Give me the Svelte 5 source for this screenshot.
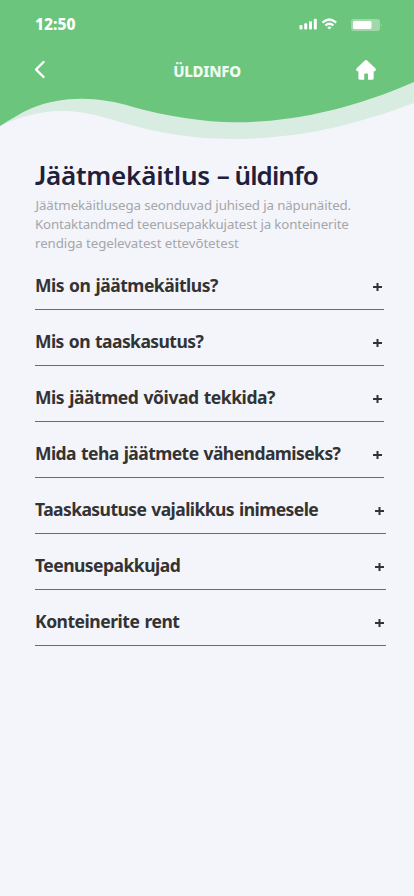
<script>
  const topics = [
    { title: 'Mis on jäätmekäitlus?', width: 348.5, spacing: -0.49 },
    { title: 'Mis on taaskasutus?', width: 348.5, spacing: -0.56 },
    { title: 'Mis jäätmed võivad tekkida?', width: 348.5, spacing: -0.45 },
    { title: 'Mida teha jäätmete vähendamiseks?', width: 348.5, spacing: -0.56 },
    { title: 'Taaskasutuse vajalikkus inimesele', width: 350.5, spacing: -0.57 },
    { title: 'Teenusepakkujad', width: 350.5, spacing: -0.53 },
    { title: 'Konteinerite rent', width: 350.5, spacing: -0.48 }
  ];
</script>

<div class="screen">
  <header>
    <svg class="wave" width="414" height="145" viewBox="0 0 414 145" aria-hidden="true">
      <path fill="#d9ece1" d="M0 0H414V103C350 127 295 139 232 139C185 139 145 130 110 119C67 106 37 109 0 126Z" />
      <path fill="#6cc57c" d="M0 0H414V82C350 110 290 122.3 235 122.3C205 122.3 165 116 133 107C100 97 65 95 32 108C20 113 10 120 0 126Z" />
    </svg>
    <div class="status">
      <span class="time">12:50</span>
      <svg width="84" height="16" viewBox="0 0 84 16" fill="#fff" aria-hidden="true">
        <rect x="0.5" y="9" width="3" height="4.4" rx="1" />
        <rect x="5.2" y="7.2" width="3" height="6.2" rx="1" />
        <rect x="10" y="5.2" width="3" height="8.2" rx="1" />
        <rect x="14.8" y="2.8" width="3" height="10.6" rx="1" />
        <path d="M22.6 5.8Q30.4-1.2 38 5.8L36.4 7.4Q30.4 2.2 24.3 7.4Z" />
        <path d="M25.6 8.7Q30.4 4.5 35.2 8.7L33.6 10.3Q30.4 7.8 27.2 10.3Z" />
        <path d="M28.2 11.2Q30.4 9.6 32.6 11.2L30.4 13.4Z" />
        <rect x="52" y="3" width="29" height="12" rx="3" opacity=".35" />
        <rect x="54" y="5" width="18.5" height="8" rx="1.5" />
        <path opacity=".4" d="M82 7Q83.5 9 82 11Z" />
      </svg>
    </div>
    <nav>
      <button class="back" aria-label="Tagasi">
        <svg width="12" height="20" viewBox="0 0 12 20" fill="none" stroke="#fff" stroke-width="2.4" stroke-linecap="round" stroke-linejoin="round"><path d="M9.6 2L2 9.5L9.6 17" /></svg>
      </button>
      <span class="heading">ÜLDINFO</span>
      <button class="home" aria-label="Avaleht">
        <svg width="22" height="22" viewBox="0 0 22 22" fill="#fff"><path d="M9.8 1.5Q11 .5 12.2 1.5L20.3 9.2Q21.5 10.6 20.4 11.9Q19.8 12.4 18.7 12.2V19.2Q18.7 20.8 17 20.8H13V15.3Q13 14.5 12.2 14.5H10Q9.2 14.5 9.2 15.3V20.8H5Q3.4 20.8 3.4 19.2V12.2Q2.2 12.4 1.6 11.9Q.5 10.6 1.7 9.2Z" /></svg>
      </button>
    </nav>
  </header>
  <main>
    <h1><span class="first"><span class="cap">J</span>äätmekäitlus</span> <span class="second">– üldinfo</span></h1>
    <p><span class="l1">Jäätmekäitlusega seonduvad juhised ja näpunäited.</span><br /><span class="l2">Kontaktandmed teenusepakkujatest ja konteinerite</span><br /><span class="l3">rendiga tegelevatest ettevõtetest</span></p>
    <ul>
      {#each topics as topic}
        <li style="width: {topic.width}px">
          <span style="letter-spacing: {topic.spacing}px">{topic.title}</span>
          <svg width="9" height="9" viewBox="0 0 9 9" stroke="#333" stroke-width="2" aria-hidden="true"><path d="M0 5H9M4.5 1V9" /></svg>
        </li>
      {/each}
    </ul>
  </main>
</div>

<style>
  :global(body) { background: #f3f5fb; }
  .screen {
    width: 414px;
    height: 896px;
    overflow: hidden;
    background: #f3f5fb;
    font-family: "Noto Sans", "Open Sans", sans-serif;
  }
  header { position: relative; height: 145px; }
  .wave { position: absolute; inset: 0; }
  .status, nav {
    position: relative;
    display: flex;
    justify-content: space-between;
    color: #fff;
  }
  .status { padding: 16px 31px 0 35px; height: 40px; box-sizing: border-box; }
  .time { font-size: 15.6px; font-weight: 800; line-height: 17px; }
  nav { padding: 0 37px 0 34px; align-items: center; height: 60px; box-sizing: border-box; }
  button { padding: 0; border: 0; background: none; display: flex; }
  .back { width: 25px; }
  .heading { font-size: 15px; font-weight: 800; letter-spacing: -0.25px; color: #effbf1; padding-top: 2px; }
  main { padding: 14px 0 0 35px; }
  h1 {
    margin: 0;
    height: 37px;
    line-height: 32px;
    font-size: 26px;
    font-weight: 600;
    color: #21203c;
    white-space: nowrap;
  }
  .cap { font-family: Lato, sans-serif; font-weight: 700; }
  .first { letter-spacing: -0.2px; }
  .second { letter-spacing: -0.95px; }
  p {
    margin: 0;
    font-size: 13.3px;
    line-height: 19px;
    color: #a5a6a9;
    white-space: nowrap;
  }
  .l1 { letter-spacing: -0.12px; margin-left: 0.5px; }
  .l2 { letter-spacing: -0.14px; }
  .l3 { letter-spacing: -0.08px; }
  ul { list-style: none; margin: 0; padding: 1px 0 0; }
  li {
    display: flex;
    justify-content: space-between;
    align-items: flex-end;
    box-sizing: border-box;
    height: 56px;
    padding: 0 2px 11px 0;
    border-bottom: 1px solid #6c6c70;
    color: #333;
    font-size: 17.5px;
    font-weight: 700;
    line-height: 26px;
    word-spacing: 1px;
    white-space: nowrap;
  }
  li svg { margin-bottom: 7px; }
</style>
